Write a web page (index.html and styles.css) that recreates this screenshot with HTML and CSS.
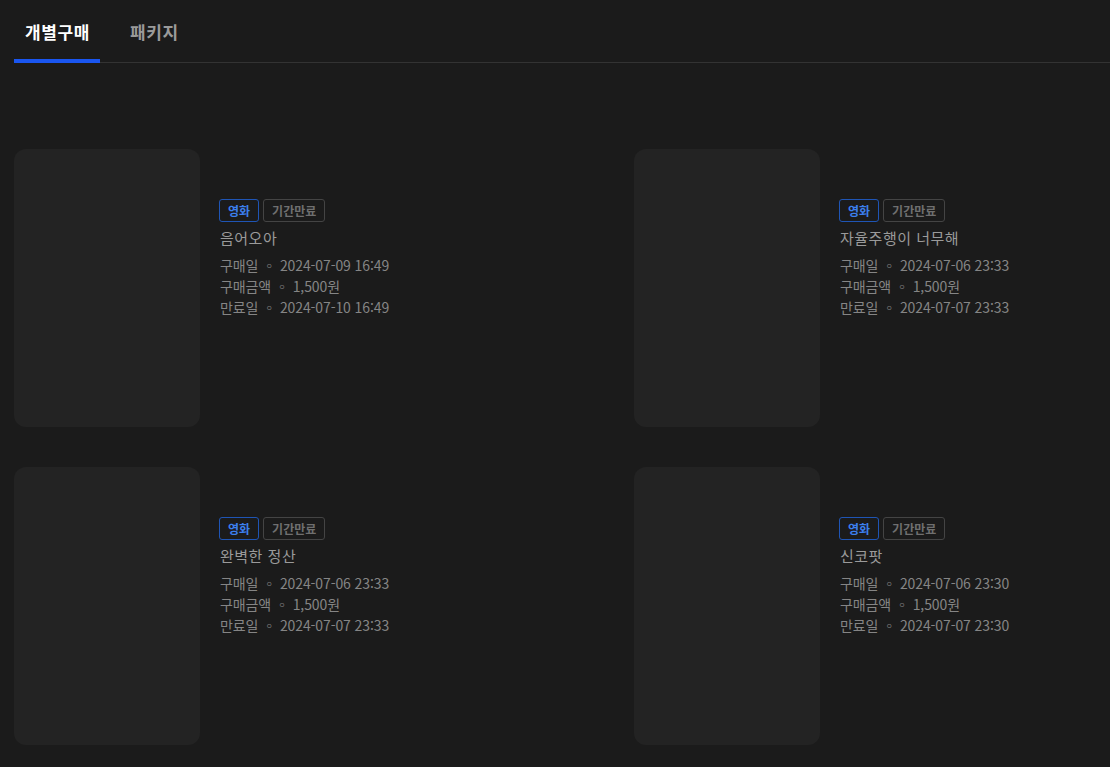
FILE: index.html
```html
<!DOCTYPE html>
<html lang="ko">
<head>
<meta charset="utf-8">
<link rel="stylesheet" href="styles.css">
</head>
<body>
<div class="page">
  <nav class="tabs">
    <div class="tab active">개별구매</div>
    <div class="tab">패키지</div>
  </nav>
  <div class="grid">
    <div class="item">
      <div class="thumb"></div>
      <div class="info">
        <div class="badges"><span class="badge blue">영화</span><span class="badge grey">기간만료</span></div>
        <div class="title">음어오아</div>
        <div class="line">구매일 ◦ 2024-07-09 16:49</div>
        <div class="line">구매금액 ◦ 1,500원</div>
        <div class="line">만료일 ◦ 2024-07-10 16:49</div>
      </div>
    </div>
    <div class="item">
      <div class="thumb"></div>
      <div class="info">
        <div class="badges"><span class="badge blue">영화</span><span class="badge grey">기간만료</span></div>
        <div class="title">자율주행이 너무해</div>
        <div class="line">구매일 ◦ 2024-07-06 23:33</div>
        <div class="line">구매금액 ◦ 1,500원</div>
        <div class="line">만료일 ◦ 2024-07-07 23:33</div>
      </div>
    </div>
    <div class="item">
      <div class="thumb"></div>
      <div class="info">
        <div class="badges"><span class="badge blue">영화</span><span class="badge grey">기간만료</span></div>
        <div class="title">완벽한 정산</div>
        <div class="line">구매일 ◦ 2024-07-06 23:33</div>
        <div class="line">구매금액 ◦ 1,500원</div>
        <div class="line">만료일 ◦ 2024-07-07 23:33</div>
      </div>
    </div>
    <div class="item">
      <div class="thumb"></div>
      <div class="info">
        <div class="badges"><span class="badge blue">영화</span><span class="badge grey">기간만료</span></div>
        <div class="title">신코팟</div>
        <div class="line">구매일 ◦ 2024-07-06 23:30</div>
        <div class="line">구매금액 ◦ 1,500원</div>
        <div class="line">만료일 ◦ 2024-07-07 23:30</div>
      </div>
    </div>
  </div>
</div>
</body>
</html>
```
FILE: styles.css
```css
* { box-sizing: border-box; }
html, body {
  margin: 0;
  padding: 0;
  background: #1b1b1b;
  font-family: "Noto Sans CJK KR", "Noto Sans", sans-serif;
  overflow: hidden;
}
.page {
  padding: 0 0 0 14px;
}
.tabs {
  display: flex;
  border-bottom: 1px solid #333;
  height: 63px;
}
.tab {
  padding: 21px 10px 0 11px;
  margin-right: 19px;
  font-size: 17px;
  line-height: 22px;
  letter-spacing: 0.6px;
  color: #9a9a9a;
  font-weight: 700;
  border-bottom: 4px solid transparent;
  margin-bottom: -1px;
}
.tab.active {
  color: #fff;
  border-bottom-color: #1a56f0;
}
.grid {
  display: grid;
  grid-template-columns: 620px 1fr;
  row-gap: 40px;
  padding-top: 86px;
}
.item {
  display: flex;
  gap: 20px;
}
.thumb {
  width: 186px;
  height: 278px;
  border-radius: 12px;
  background: #232323;
  flex: none;
}
.info {
  padding-top: 50px;
}
.badges {
  display: flex;
  gap: 4px;
  margin-bottom: 5px;
  margin-left: -1px;
}
.badge {
  height: 23px;
  padding: 0 8px;
  border-radius: 3px;
  border: 1px solid #444;
  font-size: 12px;
  font-weight: 700;
  line-height: 21px;
  color: #6f6f6f;
}
.badge.blue {
  border-color: #1f55b5;
  color: #3b7fee;
}
.title {
  font-size: 15px;
  line-height: 22px;
  color: #9a9a9a;
  letter-spacing: 0.5px;
  margin-bottom: 6px;
}
.line {
  font-size: 14px;
  line-height: 21px;
  letter-spacing: -0.1px;
  color: #858585;
}
```
